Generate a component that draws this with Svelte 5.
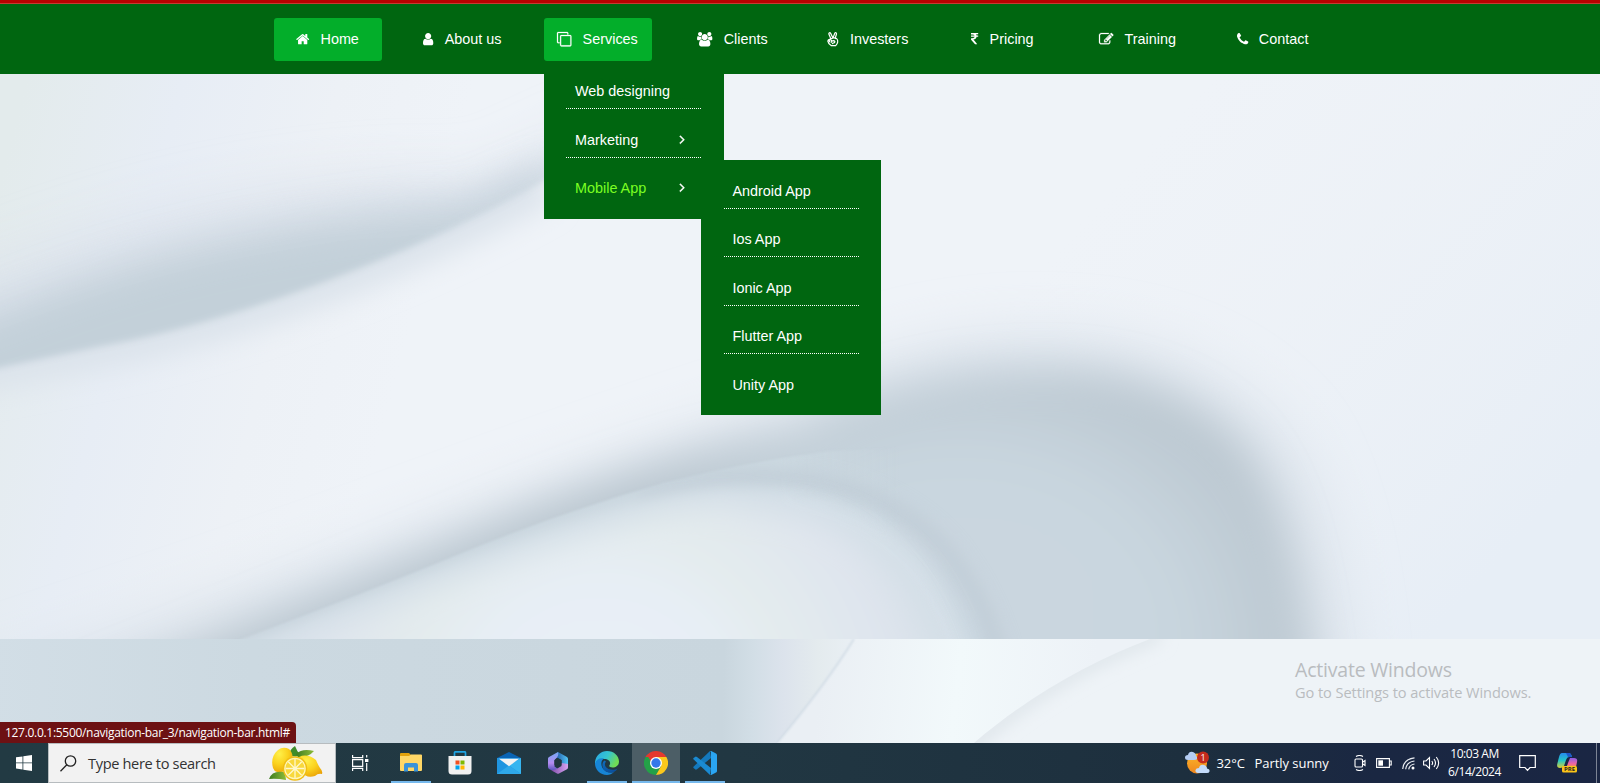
<script>
  const icons = {
    home: { x: 64, w: 1664, d: 'M1472 992v480q0 26-19 45t-45 19h-384v-384h-256v384h-384q-26 0-45-19t-19-45v-480q0-1 .5-3t.5-3l575-474 575 474q1 2 1 6zm223-69l-62 74q-8 9-21 11h-3q-13 0-21-7l-692-577-692 577q-12 8-24 7-13-2-21-11l-62-74q-8-10-7-23.5t11-21.5l719-599q32-26 76-26t76 26l244 204v-195q0-14 9-23t23-9h192q14 0 23 9t9 23v408l219 182q10 8 11 21.5t-7 23.5z' },
    user: { x: 256, w: 1280, d: 'M1536 1399q0 109-62.5 187t-150.5 78h-854q-88 0-150.5-78t-62.5-187q0-85 8.5-160.5t31.5-152 58.5-131 94-89 134.5-34.5q131 128 313 128t313-128q76 0 134.5 34.5t94 89 58.5 131 31.5 152 8.5 160.5zm-256-887q0 159-112.5 271.5t-271.5 112.5-271.5-112.5-112.5-271.5 112.5-271.5 271.5-112.5 271.5 112.5 112.5 271.5z' },
    clone: { x: 0, w: 1792, bold: 30, d: 'M1664 1632v-1088q0-32-32-32h-1088q-32 0-32 32v1088q0 32 32 32h1088q32 0 32-32zm128-1088v1088q0 160-160 160h-1088q-160 0-160-160v-1088q0-160 160-160h1088q160 0 160 160zm-384-384v160h-128v-160q0-32-32-32h-1088q-32 0-32 32v1088q0 32 32 32h160v128h-160q-160 0-160-160v-1088q0-160 160-160h1088q160 0 160 160z' },
    users: { x: 0, w: 1920, d: 'M593 896q-162 5-265 128h-134q-82 0-138-40.5t-56-118.5q0-353 124-353 6 0 43.5 21t97.5 42.5 119 21.5q67 0 133-23-5 37-5 66 0 139 81 256zm1071 637q0 120-73 189.5t-194 69.5h-874q-121 0-194-69.5t-73-189.5q0-53 3.5-103.5t14-109 26.5-108.5 43-97.5 62-81 85.5-53.5 111.5-20q10 0 43 21.5t73 48 107 48 135 21.5 135-21.5 107-48 73-48 43-21.5q61 0 111.5 20t85.5 53.5 62 81 43 97.5 26.5 108.5 14 109 3.5 103.5zm-1024-1277q0 106-75 181t-181 75-181-75-75-181 75-181 181-75 181 75 75 181zm704 384q0 159-112.5 271.5t-271.5 112.5-271.5-112.5-112.5-271.5 112.5-271.5 271.5-112.5 271.5 112.5 112.5 271.5zm576 225q0 78-56 118.5t-138 40.5h-134q-103-123-265-128 81-117 81-256 0-29-5-66 66 23 133 23 59 0 119-21.5t97.5-42.5 43.5-21q124 0 124 353zm-128-609q0 106-75 181t-181 75-181-75-75-181 75-181 181-75 181 75 75 181z' },
    peace: { x: 128, w: 1536, stroke: true, d: 'M620 860L360 250q-20-120 70-160 110-20 150 80l270 560M880 730L1080 180q60-120 160-90 100 50 70 160L1120 870M230 1130q30-180 200-230l500-170q240-40 400 100 170 160 130 420-60 260-250 440H640q-330-190-410-560zM560 1250q-80 0-130-80t0-150 140-50q100 40 130 150t-20 210M680 1130l270-60q150 0 160 130-10 130-140 150-150 0-200 160' },
    rupee: { x: 447, w: 898, d: 'M1345 470v102q0 14-9 23t-23 9h-168q-23 144-129 234t-276 110q167 178 459 536 14 16 4 34-8 18-29 18h-195q-16 0-25-12-306-367-498-571-9-9-9-22v-127q0-13 9.500-22.500t22.500-9.500h112q132 0 212.500-43t102.500-125h-427q-14 0-23-9t-9-23v-102q0-14 9-23t23-9h413q-57-113-268-113h-145q-13 0-22.500-9.500t-9.500-22.500v-133q0-14 9-23t23-9h832q14 0 23 9t9 23v102q0 14-9 23t-23 9h-233q47 61 64 144h171q14 0 23 9t9 23z' },
    edit: { x: 0, w: 1792, bold: 30, d: 'M888 1184l116-116-152-152-116 116v56h96v96h56zm440-720q-16-16-33 1l-350 350q-17 17-1 33t33-1l350-350q17-17 1-33zm80 594v190q0 119-84.5 203.500t-203.500 84.500h-832q-119 0-203.500-84.500t-84.500-203.500v-832q0-119 84.500-203.500t203.500-84.500h832q63 0 117 25 15 7 18 23 3 17-9 29l-49 49q-14 14-32 8-23-6-45-6h-832q-66 0-113 47t-47 113v832q0 66 47 113t113 47h832q66 0 113-47t47-113v-126q0-13 9-22l64-64q15-15 35-7t20 29zm-96-738l288 288-672 672h-288v-288zm444 132l-92 92-288-288 92-92q28-28 68-28t68 28l152 152q28 28 28 68t-28 68z' },
    phone: { x: 192, w: 1408, d: 'M1600 1240q0 27-10 70.500t-21 68.500q-21 50-122 106-94 51-186 51-27 0-52.500-3.500t-57.500-12.500-47.500-14.500-55.500-20.500-49-18q-98-35-175-83-128-79-264.500-215.500t-215.500-264.500q-48-77-83-175-3-9-18-49t-20.500-55.500-14.500-47.500-12.500-57.500-3.500-52.500q0-92 51-186 56-101 106-122 25-11 68.500-21t70.500-10q14 0 21 3 18 6 53 76 11 19 30 54t35 63.500 31 53.500q3 4 17.500 25t21.500 35.500 7 28.500q0 20-28.500 50t-62 55-62 53-28.500 46q0 9 5 22.500t8.500 20.500 14 24 11.500 19q76 137 174 235t235 174q2 1 19 11.500t24 14 20.500 8.500 22.500 5q18 0 46-28.500t53-62 55-62 50-28.500q14 0 28.500 7t35.500 21.500 25 17.500q25 15 53.500 31t63.500 35 54 30q70 35 76 53 3 7 3 21z' }
  };
  const nav = [
    { label: 'Home', icon: 'home', active: true },
    { label: 'About us', icon: 'user' },
    { label: 'Services', icon: 'clone', active: true, menu: true },
    { label: 'Clients', icon: 'users' },
    { label: 'Investers', icon: 'peace' },
    { label: 'Pricing', icon: 'rupee' },
    { label: 'Training', icon: 'edit' },
    { label: 'Contact', icon: 'phone' }
  ];
  const services = [
    { label: 'Web designing' },
    { label: 'Marketing', more: true },
    { label: 'Mobile App', more: true, hover: true }
  ];
  const apps = ['Android App', 'Ios App', 'Ionic App', 'Flutter App', 'Unity App'];
</script>

<div class="screen">
  <svg class="wallpaper" width="1600" height="783" viewBox="0 0 1600 783" aria-hidden="true">
    <defs>
      <linearGradient id="base" gradientUnits="userSpaceOnUse" x1="0" y1="180" x2="420" y2="290">
        <stop offset="0" stop-color="#e3ebec" /><stop offset=".35" stop-color="#e7edf5" />
        <stop offset=".7" stop-color="#edf1f6" /><stop offset="1" stop-color="#eff3f8" />
      </linearGradient>
      <linearGradient id="right" gradientUnits="userSpaceOnUse" x1="1100" y1="200" x2="1500" y2="560">
        <stop offset="0" stop-color="#ecf0f5" stop-opacity="0" /><stop offset="1" stop-color="#e7eef6" />
      </linearGradient>
      <linearGradient id="low" gradientUnits="userSpaceOnUse" x1="0" y1="0" x2="860" y2="10">
        <stop offset="0" stop-color="#d2dee6" /><stop offset=".3" stop-color="#ccd9e1" /><stop offset=".85" stop-color="#c9d6de" />
        <stop offset=".885" stop-color="#d2dee6" /><stop offset=".92" stop-color="#dce3ec" /><stop offset=".96" stop-color="#e4ebee" /><stop offset="1" stop-color="#e9eff4" />
      </linearGradient>
      <linearGradient id="lowmid" gradientUnits="userSpaceOnUse" x1="820" y1="690" x2="1090" y2="720">
        <stop offset="0" stop-color="#eaeff4" /><stop offset=".5" stop-color="#f2f9fb" /><stop offset="1" stop-color="#edf2f7" />
      </linearGradient>
      <radialGradient id="arch" gradientUnits="userSpaceOnUse" cx="960" cy="640" r="350" gradientTransform="translate(0 100) scale(1 .85)">
        <stop offset="0" stop-color="#cad7e0" /><stop offset=".6" stop-color="#c9d6df" /><stop offset="1" stop-color="#bbc7d0" />
      </radialGradient>
      <linearGradient id="inner" gradientUnits="userSpaceOnUse" x1="300" y1="540" x2="900" y2="540">
        <stop offset="0" stop-color="#c5d1da" /><stop offset=".8" stop-color="#cbd8e0" /><stop offset="1" stop-color="#cbd8e0" stop-opacity="0" />
      </linearGradient>
      <radialGradient id="lobe" gradientUnits="userSpaceOnUse" cx="600" cy="720" r="340">
        <stop offset="0" stop-color="#eaf1f9" /><stop offset=".4" stop-color="#e7eef5" /><stop offset=".6" stop-color="#e3ebed" /><stop offset=".85" stop-color="#dfe5ee" /><stop offset="1" stop-color="#d8e1e9" />
      </radialGradient>
      <filter id="b1" x="-10%" y="-10%" width="120%" height="120%"><feGaussianBlur stdDeviation="1" /></filter>
      <filter id="b3" x="-10%" y="-10%" width="120%" height="120%"><feGaussianBlur stdDeviation="3" /></filter>
      <filter id="b8" x="-20%" y="-20%" width="140%" height="140%"><feGaussianBlur stdDeviation="8" /></filter>
      <filter id="b14" x="-20%" y="-30%" width="140%" height="160%"><feGaussianBlur stdDeviation="14" /></filter>
      <filter id="b19" x="-20%" y="-40%" width="140%" height="180%"><feGaussianBlur stdDeviation="20" /></filter>
      <filter id="b28" x="-20%" y="-60%" width="140%" height="220%"><feGaussianBlur stdDeviation="27" /></filter>
      <clipPath id="upper"><rect width="1600" height="639" /></clipPath>
      <clipPath id="lower"><rect y="639" width="1600" height="104" /></clipPath>
      <mask id="overWing" maskUnits="userSpaceOnUse" x="0" y="0" width="1600" height="783"><path d="M-40 -40H700V60Q620 130 544 181Q444 237 327 281Q204 327 102 346L-40 376Z" fill="#fff" filter="url(#b3)" /></mask>
      <mask id="underCurve" maskUnits="userSpaceOnUse" x="0" y="0" width="1600" height="783"><path d="M238 640Q357 596 459 554Q561 512 663 483Q740 463 830 451L1100 440V700H80Z" fill="#fff" filter="url(#b1)" /></mask>
      <clipPath id="rightLow"><path d="M1150 639C1090 662 1030 695 974 743H1600V639Z" /></clipPath>
    </defs>
    <g clip-path="url(#upper)">
      <rect width="1600" height="640" fill="url(#base)" />
      <rect x="900" width="700" height="640" fill="url(#right)" />
      <path d="M-40 374L102 347Q204 328 327 282Q444 238 544 182" fill="none" stroke="#dbe3eb" stroke-width="42" filter="url(#b14)" />
      <g mask="url(#overWing)">
        <path d="M-80 300Q100 225 240 200T480 185L600 130L650 250L300 420L-80 480Z" fill="#dbe2eb" filter="url(#b28)" />
        <path d="M-60 335Q100 268 220 243T470 206L580 160L500 300L200 400L-60 460Z" fill="#c3d0d9" filter="url(#b19)" />
      </g>
      <path d="M-60 690Q250 590 440 520T790 400Q900 335 1040 335Q1200 335 1290 440Q1350 530 1355 760H100Z" fill="#dbe3eb" filter="url(#b28)" />
      <path d="M60 700Q357 580 510 517T800 430Q900 370 1050 370Q1165 370 1238 440Q1310 520 1317 760H100Z" fill="url(#arch)" filter="url(#b19)" />
      <g mask="url(#underCurve)">
        <rect x="80" y="430" width="1000" height="220" fill="url(#inner)" />
        <path d="M640 500Q740 468 830 485Q900 500 945 550Q985 600 1000 660" fill="none" stroke="#c1cdd7" stroke-width="16" filter="url(#b8)" />
        <path d="M200 660Q450 560 580 518Q680 485 760 489Q850 493 905 542Q965 595 985 720H200Z" fill="#d4dfe7" filter="url(#b8)" />
        <path d="M240 665Q460 573 590 533T750 510Q830 514 878 560Q930 612 950 720H240Z" fill="url(#lobe)" filter="url(#b14)" />
      </g>
    </g>
    <g clip-path="url(#lower)">
      <rect y="639" width="1600" height="104" fill="url(#lowmid)" />
      <path d="M0 639H854Q826 684 777 743H0Z" fill="url(#low)" />
      <path d="M854 639Q826 684 777 743" fill="none" stroke="#cfdae4" stroke-width="1.500" filter="url(#b1)" />
      <g clip-path="url(#rightLow)">
        <rect x="900" y="639" width="700" height="104" fill="#eef3f7" />
        <path d="M1160 634C1090 660 1030 693 964 751" fill="none" stroke="#dee5ea" stroke-width="14" filter="url(#b8)" />
      </g>
    </g>
  </svg>

  <header>
    <ul class="nav">
      {#each nav as item}
        <li class:active={item.active}>
          <a href="#top">
            <svg class="fa" width={(icons[item.icon].w / 1792) * 14.4} height="14.4" viewBox="{icons[item.icon].x} 0 {icons[item.icon].w} 1792">
              {#if icons[item.icon].stroke}
                <path d={icons[item.icon].d} fill="none" stroke="#fff" stroke-width="150" />
              {:else}
                <path d={icons[item.icon].d} fill="#fff" stroke="#fff" stroke-width={icons[item.icon].bold ?? 0} />
              {/if}
            </svg>
            <span>{item.label}</span>
          </a>
          {#if item.menu}
            <ul class="menu">
              {#each services as s}
                <li class:hover={s.hover}>
                  <span>{s.label}</span>
                  {#if s.more}
                    <svg width="14.4" height="14.4" viewBox="0 0 1792 1792"><path fill="#fff" stroke="#fff" stroke-width="60" d="M1171 960q0 13-10 23l-466 466q-10 10-23 10t-23-10l-50-50q-10-10-10-23t10-23l393-393-393-393q-10-10-10-23t10-23l50-50q10-10 23-10t23 10l466 466q10 10 10 23z" /></svg>
                  {/if}
                </li>
              {/each}
            </ul>
            <ul class="menu sub">
              {#each apps as a}<li><span>{a}</span></li>{/each}
            </ul>
          {/if}
        </li>
      {/each}
    </ul>
  </header>

  <div class="activate"><p class="big">Activate Windows</p><p class="small">Go to Settings to activate Windows.</p></div>
  <div class="status"><span>127.0.0.1:5500/navigation-bar_3/navigation-bar.html#</span></div>

  <footer>
    <div class="start">
      <svg width="16" height="16" viewBox="0 0 16 16" fill="#fff"><path d="M0 2.300L6.500 1.400V7.500H0zM7.300 1.300L16 0V7.500H7.300zM0 8.300H6.500V14.500L0 13.600zM7.300 8.300H16V16L7.300 14.700z" /></svg>
    </div>
    <div class="search">
      <svg width="17" height="17" viewBox="0 0 17 17" fill="none" stroke="#222" stroke-width="1.300"><circle cx="10.500" cy="6" r="5.200" /><path d="M6.800 9.800L.5 16.200" /></svg>
      <span>Type here to search</span>
      <svg class="lemons" width="54" height="36" viewBox="0 0 54 36">
        <defs>
          <radialGradient id="lem" cx=".35" cy=".25" r=".85"><stop offset="0" stop-color="#fff04a" /><stop offset=".5" stop-color="#fbd21e" /><stop offset="1" stop-color="#e9a006" /></radialGradient>
          <linearGradient id="leaf"><stop offset="0" stop-color="#3d7c20" /><stop offset="1" stop-color="#8dbb38" /></linearGradient>
        </defs>
        <path d="M20 10Q21 4 26 1Q28 6 31 10Q27 13 20 10z" fill="#3f8d2a" />
        <path d="M27 9Q33 3 45 6Q39 13 29 12z" fill="url(#leaf)" />
        <path d="M4 23Q1 12 9 5Q14 1 20 4Q26 10 22 19Q16 29 8 27Q5 26 4 23z" fill="url(#lem)" />
        <path d="M30 12Q38 8 47 15Q49 20 51 23Q54 26 53 29Q49 28 46 31Q37 34 32 26Q27 18 30 12z" fill="url(#lem)" />
        <path d="M0 34Q3 25 15 27Q17 31 17 35Q7 33 0 34z" fill="url(#leaf)" />
        <circle cx="26" cy="23.500" r="12.200" fill="#f0bd13" /><circle cx="26" cy="23.500" r="10.800" fill="#fff6b8" /><circle cx="26" cy="23.500" r="9.600" fill="#f8d83c" />
        <path d="M26 14V33M16.500 23.500H35.500M19.300 16.800L32.700 30.200M32.700 16.800L19.300 30.200" stroke="#fff8cc" stroke-width="1.300" />
      </svg>
    </div>
    <div class="apps">
      <div class="app">
        <svg width="17" height="16" viewBox="0 0 17 16" fill="none" stroke="#fff" stroke-width="1.200"><path d="M.6 0V2.600H10.700V0M.6 16V13.400H10.700V16M.6 4.600H10.700V11.300H.6zM14.700 0V2.600M14.700 8V16" /><path d="M13 4H16.400V7H13z" fill="#fff" stroke="none" /></svg>
      </div>
      <div class="app open">
        <svg width="22" height="20" viewBox="0 0 22 20"><path d="M0 1Q0 0 1 0H9L11 2H21Q22 2 22 3V17H0z" fill="#e3a20c" /><path d="M0 3H9L11 1.500H21Q22 1.500 22 2.500V17Q22 18 21 18H1Q0 18 0 17z" fill="#ffd766" /><path d="M4 18.500V12Q4 10 6 10H16Q18 10 18 12V18.500H14V14.500H8V18.500z" fill="#3a93d8" /></svg>
      </div>
      <div class="app">
        <svg width="24" height="24" viewBox="0 0 24 24"><path d="M6.500 5.500V1.800Q6.500.8 7.500.8H16.500Q17.500.8 17.500 1.800V5.500" fill="none" stroke="#1fa4e4" stroke-width="1.700" /><path d="M.5 5H23.500V20Q23.500 23.500 20 23.500H4Q.5 23.500 .5 20z" fill="#f1f1f1" /><path fill="#f25022" d="M7.500 9.500h4v4h-4z" /><path fill="#7fba00" d="M12.500 9.500h4v4h-4z" /><path fill="#00a4ef" d="M7.500 14.500h4v4h-4z" /><path fill="#ffb900" d="M12.500 14.500h4v4h-4z" /></svg>
      </div>
      <div class="app">
        <svg width="24" height="22" viewBox="0 0 24 22"><path d="M0 6L12 0 24 6V10H0z" fill="#0a64b4" /><path d="M0 6H24V22H0z" fill="#1f95e0" /><path d="M24 6V22L12 13.500z" fill="#36b5f0" /><path d="M0 22L12 13.500 24 22z" fill="#2fa9ea" /><path d="M2 6.800H22L12 14.300z" fill="#f3f3f3" /></svg>
      </div>
      <div class="app">
        <svg width="20" height="22" viewBox="0 0 20 22"><defs><linearGradient id="o1" x1="0" y1="0" x2="0" y2="1"><stop offset="0" stop-color="#73a7f4" /><stop offset=".6" stop-color="#b58cf0" /><stop offset="1" stop-color="#5b54bd" /></linearGradient><linearGradient id="o2"><stop offset="0" stop-color="#1c4f9d" /><stop offset="1" stop-color="#54c7f7" /></linearGradient><linearGradient id="o3"><stop offset="0" stop-color="#814ba9" /><stop offset="1" stop-color="#d6a5ef" /></linearGradient></defs><path d="M10 0L19 5Q20 6 20 7V15L13.500 12V8L7 5z" fill="url(#o2)" /><path d="M10 0Q11 3 9 5.500L6.500 8V14.500L10 17Q5 19.500 1 17Q0 16 0 15V6.500Q0 5.500 1 5z" fill="url(#o1)" /><path d="M20 12V15.500Q20 16.500 19 17.200L11 21.600Q10 22 9 21.600L3 18.200Q7 18.500 13.500 14V11z" fill="url(#o3)" /><path d="M10 6L13.600 8.300V12.600L10 15 6.400 12.800V8.300z" fill="#22363f" /></svg>
      </div>
      <div class="app open">
        <svg width="24" height="24" viewBox="0 0 24 24"><defs><linearGradient id="e1" x1="0" y1="0" x2="1" y2=".4"><stop offset="0" stop-color="#28a6e8" /><stop offset=".55" stop-color="#35c5d0" /><stop offset="1" stop-color="#70dc55" /></linearGradient><linearGradient id="e2" x1="0" y1="0" x2=".5" y2="1"><stop offset="0" stop-color="#0f6fc0" /><stop offset="1" stop-color="#0b4f9c" /></linearGradient></defs><path d="M0 11C1 4 6 0 12 0C19 0 24 5 24 10.500C24 14.500 21 16.500 17.500 16.500C15 16.500 13.500 15.600 14.500 14.200C16.500 11 13.500 8 9.500 8C5 8 1 10.500 0 14z" fill="url(#e1)" /><path d="M0 12.500C1 8.500 5 6.500 9 7.500C5.500 9.500 6 14 7.500 17C9.500 20.500 14 22.500 19 21C17 23 14.500 24 12 24C5 24 0 18.500 0 12.500z" fill="#1785d6" /><path d="M9.500 9.500C6 12 7 18 11 20.500C15 22.700 20 21.500 22.500 17.700C19 19.500 13 19.300 10.500 15.500C9.500 13.700 9.800 12 11 10.500z" fill="url(#e2)" /></svg>
      </div>
      <div class="app open current">
        <svg width="24" height="24" viewBox="0 0 24 24"><path d="M12 12L1.600 6A12 12 0 0 1 22.400 6z" fill="#e5392e" /><path d="M12 12L1.600 6A12 12 0 0 0 12 24L17.200 15z" fill="#24a148" /><path d="M12 12L17.200 15 12 24A12 12 0 0 0 22.400 6H12z" fill="#fcc81c" /><path d="M1.600 6L6.800 15 12 12V6z" fill="#24a148" /><path d="M1.600 6Q2 5 3 4L7 10.500 12 6z" fill="#e5392e" /><circle cx="12" cy="12" r="6" fill="#fff" /><circle cx="12" cy="12" r="4.700" fill="#3478e8" /></svg>
      </div>
      <div class="app open">
        <svg width="24" height="24" viewBox="0 0 24 24"><path d="M17 0L18 7 4 18.300 2.800 18.800 .5 17Q0 16.200 .7 15.500z" fill="#1479bd" /><path d="M2.800 5.500L.5 7Q0 7.800.7 8.500L17 24 18 17 4 6z" fill="#1a8ad2" /><path d="M17 0Q17.700-.2 18.200.1L23 2.400Q24 3 24 4V20Q24 21 23 21.600L18.200 23.900Q17.500 24.200 17 24 18 23.600 18 22.500V1.500Q18 .5 17 0z" fill="#2aa5f2" /></svg>
      </div>
    </div>
    <div class="tray">
      <svg class="weather" width="25" height="24" viewBox="0 0 25 24"><defs><linearGradient id="sun" x1="0" y1="0" x2="0" y2="1"><stop offset="0" stop-color="#fbb62b" /><stop offset="1" stop-color="#ef861d" /></linearGradient></defs><circle cx="12" cy="12.500" r="10" fill="url(#sun)" /><path d="M3 9Q0 9 0 6.500Q0 4 3 4Q4 0 8 1Q11 2 11 5Q13 6 12 8Q11 9 9 9z" fill="#b5cdf3" /><path d="M13 22Q10 21.500 10.500 19Q11 17 14 17Q15 13 19 14Q22 15 22 17.500Q25 18 24.500 20.500Q24 22 22 22z" fill="#c3dbfa" /><circle cx="18" cy="6.500" r="6" fill="#c42b1c" /><text x="18" y="9.800" text-anchor="middle" font-size="9" fill="#fff">1</text></svg>
      <span class="temp">32°C</span><span class="sky">Partly sunny</span>
      <svg class="cam" width="12" height="16" viewBox="0 0 12 16" fill="none" stroke="#fff" stroke-width="1.100"><path d="M2 1.500Q5.500-.5 9 1.500M2 14.500Q5.500 16.500 9 14.500M1 5Q1 4 2 4H7.500Q8.500 4 8.500 5V11Q8.500 12 7.500 12H2Q1 12 1 11zM8.500 7.300L11 5.500V10.500L8.500 8.700" /></svg>
      <svg class="bat" width="16" height="10" viewBox="0 0 16 10"><path d="M.6.6H13.400V9.400H.6zM13.500 3H15.200V7H13.500" fill="none" stroke="#fff" stroke-width="1.100" /><path d="M2.300 2.300H7V7.700H2.300z" fill="#fff" /></svg>
      <svg class="wifi" width="13" height="13" viewBox="0 0 13 13" fill="none" stroke="#e9edf2" stroke-width="1.200"><path d="M.7 12Q1.500 2 12.500.8M3.700 12.300Q4.500 5 12.500 4M6.700 12.300Q7.500 7.800 12.500 7" /><circle cx="11" cy="11" r="1.500" fill="#fff" stroke="none" /></svg>
      <svg class="vol" width="17" height="14" viewBox="0 0 17 14" fill="none" stroke="#fff" stroke-width="1.100"><path d="M.6 5H3L6.500 1.500V12.500L3 9H.6zM8.800 5Q10.400 7 8.800 9M11 3Q14 7 11 11M13.300 1Q18 7 13.300 13" /></svg>
      <div class="clock"><span class="time">10:03 AM</span><span class="date">6/14/2024</span></div>
      <svg class="note" width="17" height="17" viewBox="0 0 17 17" fill="none" stroke="#fff" stroke-width="1.200"><path d="M.7.700H16.300V12.500H11L8.500 15.300 6 12.500H.7z" /></svg>
      <svg class="copilot" width="21" height="20" viewBox="0 0 21 20"><defs><linearGradient id="c1" x1="0" y1="0" x2="0" y2="1"><stop offset="0" stop-color="#258ced" /><stop offset=".5" stop-color="#25c7c6" /><stop offset="1" stop-color="#d8d038" /></linearGradient><linearGradient id="c2" x1="0" y1="0" x2="0" y2="1"><stop offset="0" stop-color="#8b5fe4" /><stop offset=".6" stop-color="#ec63a7" /><stop offset="1" stop-color="#f79152" /></linearGradient></defs><path d="M5 0H12Q14 0 15 4H12Q10 4 9 7L7 13Q6 15 3 15Q-1 15 .5 10L2 4Q3 0 5 0z" fill="url(#c1)" /><path d="M13 5H17Q21 5 20 9L19 14H8Q10 14 11 10z" fill="url(#c2)" /><path d="M9 0H12Q14 0 15 4H11z" fill="#1d58c8" /><rect x="5" y="13" width="15" height="6.500" rx="1.500" fill="#fcc419" /><text x="12.500" y="18.400" text-anchor="middle" font-size="6" font-weight="700" fill="#222">PRE</text></svg>
      <i class="peek"></i>
    </div>
  </footer>
</div>

<style>
  :global(body) { margin: 0; overflow: hidden; }
  .screen { position: relative; width: 1600px; height: 783px; overflow: hidden; display: flex; flex-direction: column; justify-content: space-between; font-family: "Open Sans", "Noto Sans", sans-serif; }
  .wallpaper { position: absolute; inset: 0; }
  ul { margin: 0; padding: 0; list-style: none; }
  header { position: relative; box-sizing: border-box; height: 74px; background: #006610; border-top: 3px solid #b90000; box-shadow: inset 0 1px #c63b32; padding-top: 15px; font: 14.4px/17px "Liberation Sans", Arial, sans-serif; color: #fff; }
  .nav { display: flex; justify-content: center; gap: 27px; padding-left: 1px; }
  .nav > li { position: relative; width: 108px; height: 43px; border-radius: 3px; }
  .nav > li.active { background: #03ae2a; }
  .nav a { display: flex; align-items: center; justify-content: center; gap: 11px; height: 43px; padding-right: 1px; color: #fff; text-decoration: none; white-space: nowrap; }
  .fa { flex: none; overflow: visible; margin-top: -1px; }
  .menu { position: absolute; left: 0; top: 56px; width: 135px; height: 145px; padding: 0 23px 0 22px; background: #006610; }
  .menu li { display: flex; justify-content: space-between; align-items: flex-end; box-sizing: border-box; height: 49px; padding: 0 12px 8px 9px; border-bottom: 1px dotted #fff; white-space: nowrap; }
  .menu li:first-child { height: 35px; }
  .menu li:last-child { height: 48px; border-bottom-color: transparent; }
  .menu .hover { color: #7bff22; }
  .menu svg { margin-bottom: 3px; }
  .menu.sub { left: 157px; top: 142px; height: 255px; padding: 0 22px 0 23px; }
  .menu.sub li { padding-left: 8.400px; }
  .menu.sub li:nth-child(odd) { height: 49px; }
  .menu.sub li:nth-child(even) { height: 48px; }
  .activate { position: absolute; left: 1295px; top: 656px; color: #b9bcbf; white-space: nowrap; }
  .activate p { margin: 0; }
  .big { font-size: 19.500px; line-height: 28px; letter-spacing: -.2px; }
  .small { font-size: 14.600px; line-height: 17px; letter-spacing: -.08px; }
  .status { position: absolute; left: 0; top: 722px; box-sizing: border-box; width: 296px; height: 21px; padding-left: 5px; background: #6d1113; border-radius: 0 4px 0 0; color: #fff; font-size: 12px; line-height: 21px; letter-spacing: -.3px; white-space: nowrap; }
  footer { position: relative; display: flex; height: 40px; background: linear-gradient(90deg, #223a43 0, #213742 46%, #1d2f3e 74%, #1a2742 86%, #1a2643 100%); color: #fff; }
  .start { width: 48px; display: grid; place-items: center; }
  .search { box-sizing: border-box; width: 288px; height: 40px; display: flex; align-items: center; padding: 0 12px 0 11px; background: #f2f2f2; border: 1px solid #b7bcbf; color: #333; font-size: 14.600px; }
  .search span { margin-left: 11px; flex: 1; letter-spacing: -.35px; white-space: nowrap; }
  .apps { display: flex; }
  .app { position: relative; display: grid; place-items: center; width: 48px; height: 40px; margin-right: 1px; }
  .app:first-child { width: 48px; margin: 0 3px 0 0; }
  .app.open::after { content: ""; position: absolute; left: 4px; right: 4px; bottom: 0; height: 2px; background: #76b9ed; }
  .app.current { background: #4c5e66; }
  .app.current::after { left: 0; right: 0; }
  .tray { display: flex; align-items: center; margin-left: auto; font-size: 13px; }
  .tray span { white-space: nowrap; }
  .weather { margin-right: 7px; }
  .temp { width: 38px; letter-spacing: -.1px; }
  .sky { width: 99px; letter-spacing: -.05px; }
  .cam { margin-right: 10px; }
  .bat { margin-right: 10px; }
  .wifi { margin-right: 8px; }
  .vol { margin-right: 8px; }
  .clock { display: flex; flex-direction: column; align-items: center; width: 54px; font-size: 12px; line-height: 18px; letter-spacing: -.45px; }
  .note { margin: 0 21px 0 17.500px; }
  .peek { width: 4px; height: 40px; margin-left: 18px; border-left: 1px solid #7c8494; box-sizing: border-box; }
</style>
